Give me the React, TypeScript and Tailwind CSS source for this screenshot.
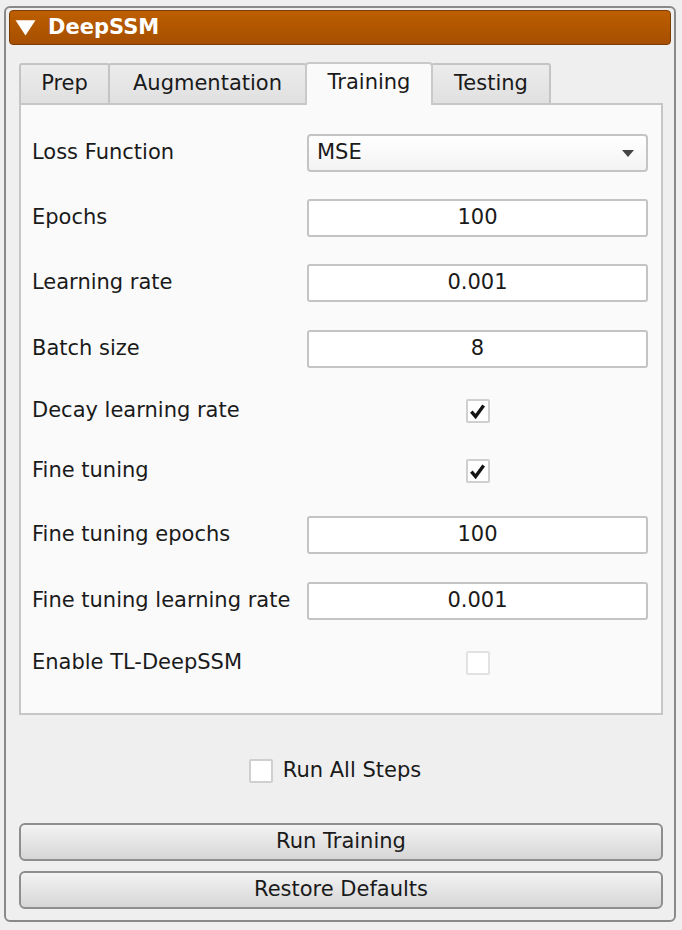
import React from "react";

const font = { fontFamily: '"DejaVu Sans", "Liberation Sans", sans-serif' };

type Row =
  | { label: string; kind: "combo"; value: string; h: string }
  | { label: string; kind: "input"; value: string; h: string }
  | { label: string; kind: "check"; checked: boolean; disabled?: boolean; h: string };

const rows: Row[] = [
  { label: "Loss Function", kind: "combo", value: "MSE", h: "h-[64px]" },
  { label: "Epochs", kind: "input", value: "100", h: "h-[66px]" },
  { label: "Learning rate", kind: "input", value: "0.001", h: "h-[64px]" },
  { label: "Batch size", kind: "input", value: "8", h: "h-[68px]" },
  { label: "Decay learning rate", kind: "check", checked: true, h: "h-[56px]" },
  { label: "Fine tuning", kind: "check", checked: true, h: "h-[64px]" },
  { label: "Fine tuning epochs", kind: "input", value: "100", h: "h-[64px]" },
  { label: "Fine tuning learning rate", kind: "input", value: "0.001", h: "h-[68px]" },
  { label: "Enable TL-DeepSSM", kind: "check", checked: false, disabled: true, h: "h-[56px]" },
];

const tabs = [
  { label: "Prep", w: "w-[91px]" },
  { label: "Augmentation", w: "w-[199px]" },
  { label: "Training", w: "w-[128px]", active: true },
  { label: "Testing", w: "w-[120px]" },
];

function Check({ checked, disabled }: { checked: boolean; disabled?: boolean }) {
  return (
    <div
      className={`w-[24px] h-[24px] rounded-[2px] border-2 bg-white flex items-center justify-center ${
        disabled ? "border-[#e2e2e2]" : "border-[#cfcfcf]"
      }`}
    >
      {checked && (
        <svg width="17" height="17" viewBox="0 0 16 16">
          <path d="M2.2 8.2 L6.2 12.8 L13.8 2.4" fill="none" stroke="#141414" strokeWidth="3.2" />
        </svg>
      )}
    </div>
  );
}

export default function App() {
  return (
    <div className="w-[682px] h-[930px] bg-[#efefef] pt-[6px] px-[4px] text-[#1a1a1a] text-[21px]" style={font}>
      <div className="w-[672px] h-[916px] border-2 border-[#8a8a8a] rounded-[6px] bg-[#efefef] px-[2px] pt-[2px] flex flex-col">
        {/* Header */}
        <div className="h-[35px] mx-[1px] rounded-[4px] border border-[#7e3d00] bg-gradient-to-b from-[#bd5e00] to-[#a64f00] flex items-center pl-[5px] text-white font-bold">
          <svg width="21" height="17" viewBox="0 0 20 16" className="mr-[12px]">
            <path d="M0.5 1 L19.5 1 L10 15.5 Z" fill="#ffffff" />
          </svg>
          DeepSSM
        </div>

        {/* Tabs */}
        <div className="ml-[11px] mt-[15px] w-[644px]">
          <div className="flex items-end h-[43px]">
            {tabs.map((t) =>
              t.active ? (
                <div
                  key={t.label}
                  className={`${t.w} h-[43px] bg-[#fafafa] border-2 border-b-0 border-[#c9c9c9] rounded-t-[4px] flex items-center justify-center -mb-[2px] -ml-[2px] relative z-10 pb-[4px]`}
                >
                  {t.label}
                </div>
              ) : (
                <div
                  key={t.label}
                  className={`${t.w} h-[40px] bg-gradient-to-b from-[#ececec] to-[#e0e0e0] border-2 border-b-0 border-[#c4c4c4] rounded-t-[3px] -ml-[2px] first:ml-0 flex items-center justify-center`}
                >
                  {t.label}
                </div>
              )
            )}
          </div>
          <div className="h-[612px] bg-[#fafafa] border-2 border-[#c6c6c6] pt-[16px] pl-[11px] pr-[13px]">
            {rows.map((r) => (
              <div key={r.label} className={`${r.h} flex items-center`}>
                <div className="w-[275px] shrink-0 whitespace-nowrap">{r.label}</div>
                <div className="flex-1 flex items-center justify-center">
                  {r.kind === "combo" && (
                    <div className="w-full h-[38px] rounded-[4px] border-2 border-[#c4c4c4] bg-gradient-to-b from-[#ffffff] to-[#f3f3f3] flex items-center pl-[8px] pr-[12px]">
                      <span className="flex-1">{r.value}</span>
                      <svg width="12" height="7" viewBox="0 0 12 7">
                        <path d="M0 0 L12 0 L6 7 Z" fill="#444" />
                      </svg>
                    </div>
                  )}
                  {r.kind === "input" && (
                    <div className="w-full h-[38px] rounded-[3px] border-2 border-[#c4c4c4] bg-white flex items-center justify-center">
                      {r.value}
                    </div>
                  )}
                  {r.kind === "check" && <Check checked={r.checked} disabled={r.disabled} />}
                </div>
              </div>
            ))}
          </div>
        </div>

        {/* Run all steps */}
        <div className="mt-[40px] flex items-center justify-center gap-[10px] pr-[10px]">
          <Check checked={false} />
          <span>Run All Steps</span>
        </div>

        {/* Buttons */}
        <div className="mt-[36px] ml-[11px] w-[644px] flex flex-col gap-[10px]">
          {["Run Training", "Restore Defaults"].map((b) => (
            <div
              key={b}
              className="h-[38px] rounded-[6px] border-2 border-[#8e8e8e] bg-gradient-to-b from-[#f3f3f3] to-[#d6d6d6] flex items-center justify-center"
            >
              {b}
            </div>
          ))}
        </div>
      </div>
    </div>
  );
}
